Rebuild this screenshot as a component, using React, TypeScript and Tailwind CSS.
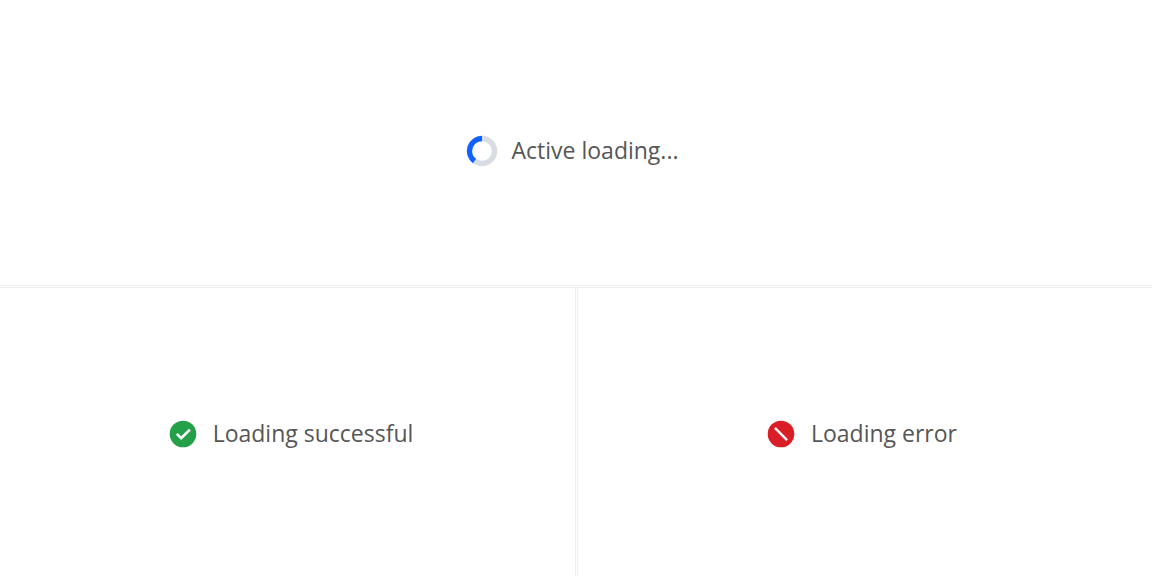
import type { ReactNode } from "react";

function Spinner() {
  return (
    <svg viewBox="0 0 32 32" className="size-8" aria-hidden="true">
      <circle cx="16" cy="16" r="12.5" fill="none" stroke="#d8dde3" strokeWidth="5.4" />
      <path d="M16 3.5A12.5 12.5 0 0 0 8.5 26" fill="none" stroke="#0f62fe" strokeWidth="5.4" />
    </svg>
  );
}

function SuccessIcon() {
  return (
    <svg viewBox="0 0 32 32" className="size-8" aria-hidden="true">
      <circle cx="16" cy="16" r="13.3" fill="#24a148" />
      <path d="M9.8 15.9 14.2 20.2 22.9 11.6" fill="none" stroke="#fff" strokeWidth="2.7" />
    </svg>
  );
}

function ErrorIcon() {
  return (
    <svg viewBox="0 0 32 32" className="size-8" aria-hidden="true">
      <circle cx="16" cy="16" r="13.3" fill="#da1e28" />
      <path d="m9.9 9.9 12.2 12.2" stroke="#fff" strokeWidth="2.4" />
    </svg>
  );
}

function Status({ icon, children }: { icon: ReactNode; children: ReactNode }) {
  return (
    <div role="status" className="flex items-center gap-3.5">
      {icon}
      <p className="pb-0.5 text-[23px] leading-8 text-[#565656]">{children}</p>
    </div>
  );
}

export default function App() {
  return (
    <main className="grid min-h-screen grid-cols-2 grid-rows-2 bg-white font-['Open_Sans','Noto_Sans',sans-serif]">
      <section className="col-span-2 flex items-center justify-center border-b-3 border-double border-[#eeeeee] pt-4 pr-2">
        <Status icon={<Spinner />}>Active loading...</Status>
      </section>
      <section className="flex items-center justify-center pt-1 pl-1">
        <Status icon={<SuccessIcon />}>Loading successful</Status>
      </section>
      <section className="-ml-px flex items-center justify-center border-l-3 border-double border-[#eeeeee] pt-1 pr-2">
        <Status icon={<ErrorIcon />}>Loading error</Status>
      </section>
    </main>
  );
}
